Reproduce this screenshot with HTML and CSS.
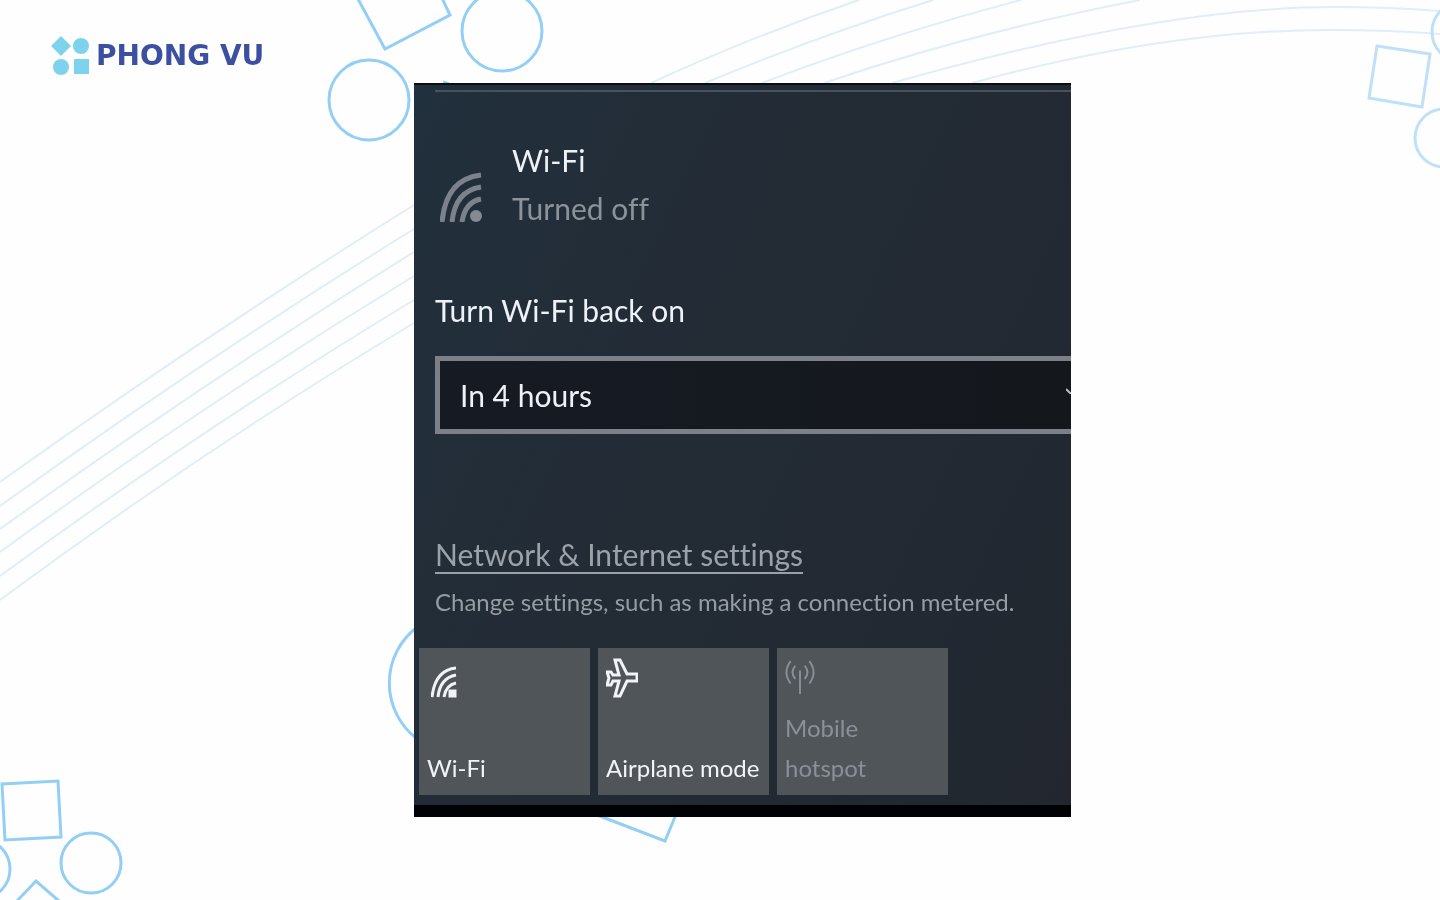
FILE: index.html
```html
<!DOCTYPE html>
<html lang="en">
<head>
<meta charset="utf-8">
<title>Phong Vu - Wi-Fi</title>
<link rel="stylesheet" href="styles.css">
</head>
<body>
<svg class="backdrop" viewBox="0 0 1440 900" preserveAspectRatio="xMidYMid slice" aria-hidden="true">
  <g class="waves">
    <path d="M0 482Q207 334 414 205M651 83Q753 36 859 0"/>
    <path d="M0 506Q207 357 414 229M705 83Q815 37 933 0"/>
    <path d="M0 529Q207 380 414 252M762 83Q885 36 1021 0"/>
    <path d="M0 552Q207 402 414 276M824 83Q970 33 1140 0"/>
    <path d="M0 576Q207 425 414 300M892 83Q1160 7 1335 7Q1390 7 1440 11"/>
    <path d="M0 600Q207 447 414 323M972 83Q1165 30 1330 30Q1390 30 1440 34"/>
  </g>
  <g class="shapes">
    <circle cx="369" cy="100" r="40"/>
    <circle cx="502" cy="31" r="40"/>
    <path d="M358 -1L385 49L450 15L442 -2M443 82L449 84"/>
    <path d="M416 628A70 70 0 0 0 416 738"/>
    <path d="M597 815L665 841L677 812"/>
    <path d="M2 784L58 781L61 837L5 840Z"/>
    <circle cx="91" cy="863" r="30"/>
    <circle cx="-20" cy="869" r="30"/>
    <path d="M17 901L36 881L59 901"/>
  </g>
  <g class="shapes shapes-light">
    <path d="M1377 46L1430 54L1422 107L1369 98Z"/>
    <circle cx="1444" cy="138" r="29"/>
    <circle cx="1462" cy="32" r="30"/>
  </g>
</svg>
<header class="header">
  <svg class="logo-mark" viewBox="0 0 40 39" aria-hidden="true">
    <path d="M11 0L21 10L11 20L1 10Z"/><circle cx="31" cy="10" r="8"/>
    <circle cx="11" cy="31" r="8"/><path d="M24 23H39V38H24Z"/>
  </svg>
  <span class="logo-name">PHONG VU</span>
</header>
<main class="stage">
  <section class="panel">
    <hr class="rule">
    <div class="network">
      <svg class="network-icon" viewBox="0 0 42 50" aria-hidden="true">
        <path d="M2 50Q6 7 41 3M12 50Q15 19 41 15M22 50Q25 30 41 27"/><circle cx="36" cy="44" r="6"/>
      </svg>
      <div class="network-text">
        <h1 class="name">Wi-Fi</h1>
        <p class="status">Turned off</p>
      </div>
    </div>
    <label class="label" for="timer">Turn Wi-Fi back on</label>
    <div class="select-wrap">
      <select class="select" id="timer"><option>In 4 hours</option></select>
      <svg class="chevron" viewBox="0 0 5 6" aria-hidden="true"><path d="M0 1L8 9"/></svg>
    </div>
    <a class="link" href="#">Network &amp; Internet settings</a>
    <p class="hint">Change settings, such as making a connection metered.</p>
    <div class="tiles">
      <button class="tile">
        <svg class="tile-icon wifi" viewBox="0 0 26 32" aria-hidden="true">
          <path d="M1 31Q4 4 25 2M7 31Q9 12 25 9M13 31Q15 19 25 17"/><path d="M19 25H24V30H19Z"/>
        </svg>
        <span>Wi-Fi</span>
      </button>
      <button class="tile">
        <svg class="tile-icon plane" viewBox="0 0 32 40" aria-hidden="true">
          <path d="M1 14H5L7 17H13L9 2H14L21 16H31V23H21L14 38H9L13 23H7L5 27H1L3 20Z"/>
        </svg>
        <span>Airplane mode</span>
      </button>
      <button class="tile" disabled>
        <svg class="tile-icon hotspot" viewBox="0 0 32 38" aria-hidden="true">
          <path d="M6 2Q-3 14 6 26M11 7Q5 14 11 21M21 7Q27 14 21 21M26 2Q35 14 26 26M16 12V37"/>
        </svg>
        <span>Mobile<br>hotspot</span>
      </button>
    </div>
  </section>
</main>
</body>
</html>
```
FILE: styles.css
```css
* { box-sizing: border-box; }

body {
  margin: 0;
  min-height: 100vh;
  overflow-x: hidden;
  background: #fefefe;
  font-family: Lato, "Open Sans", sans-serif;
  font-variant-ligatures: none;
}

h1, p { margin: 0; font-weight: 400; }

.backdrop {
  position: fixed;
  inset: 0;
  z-index: -1;
  width: 100%;
  height: 100%;
  fill: none;
}
.waves { stroke: #e2edfa; stroke-width: 2; }
.shapes { stroke: #93cff5; stroke-width: 3; }
.shapes-light { stroke: #bfe0f8; }

.header {
  display: flex;
  align-items: center;
  gap: 6px;
  height: 83px;
  padding: 28px 50px 0;
}
.logo-mark { width: 40px; height: 39px; fill: #7dd3ec; }
.logo-name {
  color: #3c4fa0;
  font: 700 28px/32px "DejaVu Sans", sans-serif;
}

.stage {
  display: grid;
  grid-template-columns: 414fr 657fr 369fr;
}

.panel {
  grid-column: 2;
  overflow: hidden;
  padding: 7px 0 10px 21px;
  border-top: 2px solid #0b0e13;
  border-bottom: 12px solid #010205;
  background: linear-gradient(115deg, #21303d 0%, #232c36 35%, #22272f 100%);
  color: #eef1f5;
}

.rule { height: 2px; margin: -2px 0 0; border: 0; background: #46535f; }

.network { display: flex; align-items: flex-end; gap: 30px; margin-top: 44px; }
.network-icon { width: 42px; height: 50px; margin-bottom: 10px; margin-left: 5px; fill: #838a92; }
.network-icon path { fill: none; stroke: #7b828b; stroke-width: 5; }
.name, .status, .label, .select, .link { font-size: 30px; line-height: 48px; }
.status { color: #8b9299; }

.label { display: block; margin-top: 54px; }

.select-wrap { position: relative; margin-top: 22px; }
.select {
  display: block;
  width: 100%;
  height: 78px;
  padding: 0 20px;
  border: 5px solid #7c8189;
  border-right: 0;
  border-radius: 0;
  appearance: none;
  background: linear-gradient(90deg, #161a23, #14181d);
  color: #eef1f5;
  font-family: inherit;
}
.chevron {
  position: absolute;
  top: 32px;
  right: 0;
  width: 5px;
  height: 6px;
  fill: none;
  stroke: #b7bdc5;
  stroke-width: 2;
}

.link {
  display: inline-block;
  margin-top: 98px;
  height: 42px;
  border-bottom: 2px solid #9aa0a7;
  color: #9ba1a8;
  line-height: 44px;
  text-decoration: none;
  white-space: nowrap;
}
.hint { margin-top: 10px; color: #969ca3; font-size: 24px; line-height: 36px; white-space: nowrap; }

.tiles {
  display: grid;
  grid-template-columns: repeat(3, 171px);
  gap: 8px;
  margin: 28px 0 0 -16px;
}
.tile {
  display: flex;
  flex-direction: column;
  justify-content: space-between;
  height: 147px;
  padding: 10px 0 7px 8px;
  border: 0;
  background: #50555a;
  color: #f1f4f7;
  font-family: inherit;
  font-size: 24px;
  line-height: 40px;
  text-align: left;
  white-space: nowrap;
}
.tile:disabled { color: #8a9098; }
.tile-icon { fill: none; stroke: currentColor; stroke-width: 2; }
.wifi { width: 26px; height: 32px; margin: 8px 0 0 4px; stroke-width: 3; }
.wifi path + path { fill: currentColor; }
.plane { width: 32px; height: 40px; stroke-width: 3; }
.hotspot { width: 30px; height: 38px; }
```
